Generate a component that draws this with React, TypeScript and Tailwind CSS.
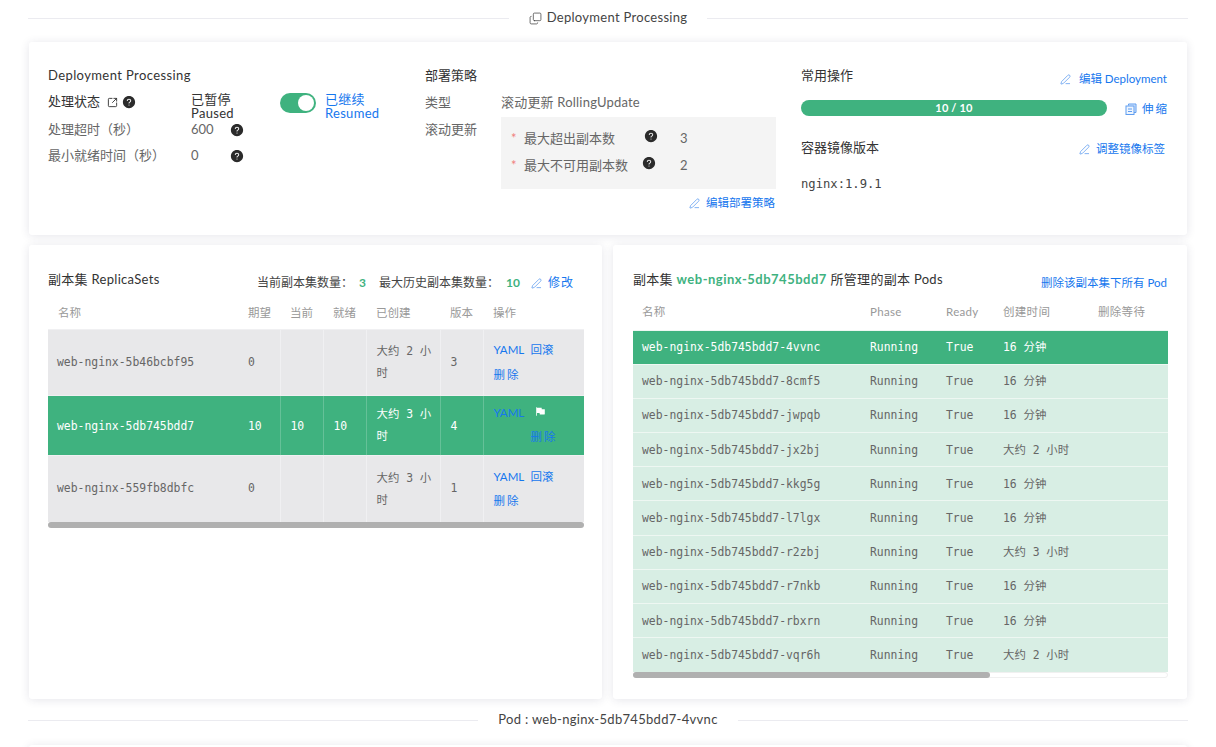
import { AiFillQuestionCircle, AiFillFlag } from "react-icons/ai";
import { PenLine, Copy, SquareArrowOutUpRight } from "lucide-react";

const sans = "font-['Lato','Noto_Sans_CJK_SC',sans-serif]";
const mono = "font-['DejaVu_Sans_Mono','Noto_Sans_CJK_SC',monospace]";

const Help = ({ className = "" }: { className?: string }) => (
  <AiFillQuestionCircle size={14} className={`text-[#2b2b2b] ${className}`} />
);

const EditLink = ({ text, gap = "mr-[6px]" }: { text: string; gap?: string }) => (
  <span className="flex items-center text-[11.5px] leading-[16px] text-[#1677ee]">
    <PenLine size={11} strokeWidth={1.5} className={`${gap} text-[#4a90ee]`} />
    {text}
  </span>
);

// stacked sheets next to the scale action
const ScaleIcon = () => (
  <svg width="12" height="12" viewBox="0 0 12 12" fill="none" stroke="#5f9df0" strokeWidth="1" className="mr-[5px]">
    <path d="M3.5 2.5V1h7.5v8.5H9" fill="#dbe9fc" />
    <rect x="1" y="3" width="8" height="8.5" fill="#eef5fe" />
    <path d="M3 6h4M3 8.5h4" />
  </svg>
);

const Divider = ({ children }: { children: React.ReactNode }) => (
  <div className="flex h-[36px] items-center">
    <div className="h-px flex-1 bg-[#ebebf0]" />
    <div className="flex items-center px-[20px] text-[13px] tracking-[0.3px] text-[#444]">{children}</div>
    <div className="h-px flex-1 bg-[#ebebf0]" />
  </div>
);

const replicaRows = [
  { name: "web-nginx-5b46bcbf95", want: "0", cur: "", ready: "", age: "大约 2 小时", rev: "3", h: "h-[66px]", pt: "pt-[1px]" },
  { name: "web-nginx-5db745bdd7", want: "10", cur: "10", ready: "10", age: "大约 3 小时", rev: "4", h: "h-[60px]", pt: "pt-[4px]", active: true },
  { name: "web-nginx-559fb8dbfc", want: "0", cur: "", ready: "", age: "大约 3 小时", rev: "1", h: "h-[67px]", pt: "pt-0" },
];

const pods = [
  ["4vvnc", "16 分钟"],
  ["8cmf5", "16 分钟"],
  ["jwpqb", "16 分钟"],
  ["jx2bj", "大约 2 小时"],
  ["kkg5g", "16 分钟"],
  ["l7lgx", "16 分钟"],
  ["r2zbj", "大约 3 小时"],
  ["r7nkb", "16 分钟"],
  ["rbxrn", "16 分钟"],
  ["vqr6h", "大约 2 小时"],
];

const card = "rounded-[3px] bg-white shadow-[0_1px_10px_rgba(40,40,80,0.12)]";

const App = () => {
  return (
    <div className={`h-[747px] w-[1216px] overflow-hidden bg-white px-[28px] ${sans}`}>
      <div className="mx-px h-0 shadow-[0_0_8px_rgba(40,40,80,0.2)]" />
      <Divider>
        <Copy size={13} strokeWidth={1.4} className="mr-[5px] -scale-y-100" />
        Deployment Processing
      </Divider>

      <div className={`${card} mx-px mt-[6px] grid h-[193px] grid-cols-[377px_376px_366px] px-[19px] pt-[25px]`}>
        {/* processing */}
        <div className="text-[13px] text-[#666]">
          <div className="h-[16px] leading-[16px] tracking-[0.4px] text-[#333]">Deployment Processing</div>
          <div className="mt-[9px] flex h-[25px]">
            <div className="flex w-[143px] items-center pb-[5px] text-[#333]">
              处理状态
              <SquareArrowOutUpRight size={11} className="ml-[7px] text-[#333]" />
              <Help className="ml-[4px]" />
            </div>
            <div className="w-[89px] leading-[14px] tracking-[0.3px] text-[#333]">
              <div>已暂停</div>
              <div>Paused</div>
            </div>
            <div className="mt-[1px] flex h-[20px] w-[36px] items-center justify-end rounded-full bg-[#3fb27f] pr-[2px]">
              <div className="h-[16px] w-[16px] rounded-full bg-white" />
            </div>
            <div className="ml-[9px] leading-[14px] tracking-[0.3px] text-[#1677ee]">
              <div>已继续</div>
              <div>Resumed</div>
            </div>
          </div>
          <div className="flex h-[26px] items-center">
            <span className="w-[143px]">处理超时（秒）</span>
            <span className="w-[39px]">600</span>
            <Help />
          </div>
          <div className="flex h-[26px] items-center">
            <span className="w-[143px]">最小就绪时间（秒）</span>
            <span className="w-[39px]">0</span>
            <Help />
          </div>
        </div>

        {/* strategy */}
        <div className="text-[13px] text-[#666]">
          <div className="h-[16px] leading-[16px] text-[#333]">部署策略</div>
          <div className="mt-[6px] flex h-[28px] items-center">
            <span className="w-[76px]">类型</span>
            <span className="tracking-[0.2px]">滚动更新 RollingUpdate</span>
          </div>
          <div className="flex">
            <span className="mt-[3px] w-[76px]">滚动更新</span>
            <div className="flex h-[72px] w-[275px] flex-col justify-center gap-[9px] bg-[#f4f4f4] pb-[2px]">
              <div className="flex h-[18px] items-center">
                <span className="ml-[10px] w-[13px] text-[#f08080]">*</span>
                <span className="w-[120px]">最大超出副本数</span>
                <Help className="mb-[6px]" />
                <span className="ml-[22px]">3</span>
              </div>
              <div className="flex h-[18px] items-center">
                <span className="ml-[10px] w-[13px] text-[#f08080]">*</span>
                <span className="w-[118px]">最大不可用副本数</span>
                <Help className="mb-[6px]" />
                <span className="ml-[24px]">2</span>
              </div>
            </div>
          </div>
          <div className="mt-[6px] flex w-[350px] justify-end">
            <EditLink text="编辑部署策略" />
          </div>
        </div>

        {/* actions */}
        <div className="text-[13px] text-[#333]">
          <div className="flex h-[16px] justify-between">
            <span className="leading-[16px]">常用操作</span>
            <span className="mt-[4px]">
              <EditLink text="编辑 Deployment" gap="mr-[8px]" />
            </span>
          </div>
          <div className="mt-[17px] flex h-[16px] items-center justify-between">
            <div className="flex h-[16px] w-[306px] items-center justify-center rounded-full bg-[#3fb27f] text-[11px] font-bold tracking-[0.2px] text-white">
              10 / 10
            </div>
            <span className="mr-[-2px] mt-[2px] flex items-center text-[11.5px] tracking-[2px] text-[#1677ee]">
              <ScaleIcon />
              伸缩
            </span>
          </div>
          <div className="mt-[23px] flex h-[18px] items-center justify-between">
            <span>容器镜像版本</span>
            <span className="mr-[2px] mt-[2px]">
              <EditLink text="调整镜像标签" />
            </span>
          </div>
          <div className={`mt-[18px] text-[12.2px] text-[#444] ${mono}`}>nginx:1.9.1</div>
        </div>
      </div>

      <div className="mx-px mt-[10px] grid h-[454px] grid-cols-[573px_574px] gap-[11px]">
        {/* replica sets */}
        <div className={`${card} px-[19px]`}>
          <div className="mt-[25px] flex h-[18px] items-start text-[13px] tracking-[0.3px] text-[#333]">
            <span className="leading-[18px]">副本集 ReplicaSets</span>
            <div className="ml-auto mr-[9px] mt-[5px] flex items-center text-[12px] leading-[16px] tracking-normal text-[#444]">
              当前副本集数量：
              <span className="ml-[6px] w-[20px] font-bold text-[#3fb27f]">3</span>
              最大历史副本集数量：
              <span className="ml-[7px] w-[25px] font-bold text-[#3fb27f]">10</span>
              <PenLine size={11} strokeWidth={1.5} className="mr-[6px] text-[#4a90ee]" />
              <span className="tracking-[1px] text-[#1677ee]">修改</span>
            </div>
          </div>
          <table className="mt-[11px] w-[536px] table-fixed border-collapse">
            <colgroup>
              <col className="w-[190px]" />
              <col className="w-[42px]" />
              <col className="w-[43px]" />
              <col className="w-[43px]" />
              <col className="w-[74px]" />
              <col className="w-[43px]" />
              <col className="w-[101px]" />
            </colgroup>
            <thead>
              <tr className="h-[30px] text-left text-[11.5px] text-[#999]">
                {["名称", "期望", "当前", "就绪", "已创建", "版本", "操作"].map((h) => (
                  <th key={h} className="pb-[3px] pl-[10px] font-normal">
                    {h}
                  </th>
                ))}
              </tr>
            </thead>
            <tbody className={`text-[11.4px] ${mono}`}>
              {replicaRows.map((r) => {
                const line = `border-l ${r.active ? "border-white/20" : "border-[#f0f0f2]"}`;
                const cell = `${line} pl-[10px] ${r.pt}`;
                return (
                  <tr
                    key={r.name}
                    className={`${r.h} border-t border-[#f0f0f2] ${r.active ? "bg-[#3fb27f] text-white" : "bg-[#e8e8ea] text-[#666]"}`}
                  >
                    <td className={`pl-[9px] ${r.pt}`}>{r.name}</td>
                    <td className={`pl-[10px] ${r.pt}`}>{r.want}</td>
                    <td className={cell}>{r.cur}</td>
                    <td className={cell}>{r.ready}</td>
                    <td className={`${line} pl-[10px] pr-[8px] leading-[22px]`}>{r.age}</td>
                    <td className={cell}>{r.rev}</td>
                    <td className={`${line} pl-[10px] ${sans} text-[11.5px] leading-[24px] text-[#1677ee]`}>
                      {r.active ? (
                        <>
                          <div className="flex h-[24px] items-center">
                            <span className="w-[40px]">YAML</span>
                            <AiFillFlag size={11} className="mb-[3px] ml-[1px] text-white" />
                          </div>
                          <div className="pl-[37px] tracking-[2px]">删除</div>
                        </>
                      ) : (
                        <>
                          <div className="flex h-[25px] items-center">
                            <span className="w-[37px]">YAML</span>
                            <span>回滚</span>
                          </div>
                          <div className="tracking-[2px]">删除</div>
                        </>
                      )}
                    </td>
                  </tr>
                );
              })}
            </tbody>
          </table>
          <div className="h-[6px] w-[536px] rounded-[3px] bg-[#b0b0b0]" />
        </div>

        {/* pods */}
        <div className={`${card} px-[20px]`}>
          <div className="mt-[25px] flex h-[18px] items-start justify-between text-[13px] tracking-[0.3px] text-[#333]">
            <span className="leading-[18px]">
              副本集 <span className="font-bold tracking-[0.5px] text-[#3fb27f]">web-nginx-5db745bdd7</span> 所管理的副本 Pods
            </span>
            <span className="mt-[5px] text-[11.5px] leading-[16px] tracking-normal text-[#1677ee]">删除该副本集下所有 Pod</span>
          </div>
          <table className="mt-[12px] w-[535px] table-fixed border-collapse">
            <colgroup>
              <col className="w-[228px]" />
              <col className="w-[76px]" />
              <col className="w-[57px]" />
              <col className="w-[95px]" />
              <col className="w-[79px]" />
            </colgroup>
            <thead>
              <tr className="h-[30px] text-left text-[11.5px] tracking-[0.3px] text-[#999]">
                {["名称", "Phase", "Ready", "创建时间", "删除等待"].map((h) => (
                  <th key={h} className="pb-[6px] pl-[9px] font-normal">
                    {h}
                  </th>
                ))}
              </tr>
            </thead>
            <tbody className={`text-[11.4px] ${mono}`}>
              {pods.map(([id, age], i) => (
                <tr
                  key={id}
                  className={`h-[34.2px] border-t border-[#eef7f2] ${i === 0 ? "bg-[#3fb27f] text-white" : "bg-[#d8eee4] text-[#666]"}`}
                >
                  <td className="pl-[9px] pt-[1px]">web-nginx-5db745bdd7-{id}</td>
                  <td className="pl-[9px] pt-[1px]">Running</td>
                  <td className="pl-[9px] pt-[1px]">True</td>
                  <td className="pl-[9px] pt-[1px]">{age}</td>
                  <td />
                </tr>
              ))}
            </tbody>
          </table>
          <div className="h-[6px] w-[535px] rounded-[3px] border border-[#f0f0f0] bg-white">
            <div className="-m-px h-[6px] w-[357px] rounded-[3px] bg-[#b0b0b0]" />
          </div>
        </div>
      </div>

      <div className="mt-[3px]">
        <Divider>Pod : web-nginx-5db745bdd7-4vvnc</Divider>
      </div>
      <div className={`${card} mx-px mt-[7px] h-[20px]`} />
    </div>
  );
};

export default App;
